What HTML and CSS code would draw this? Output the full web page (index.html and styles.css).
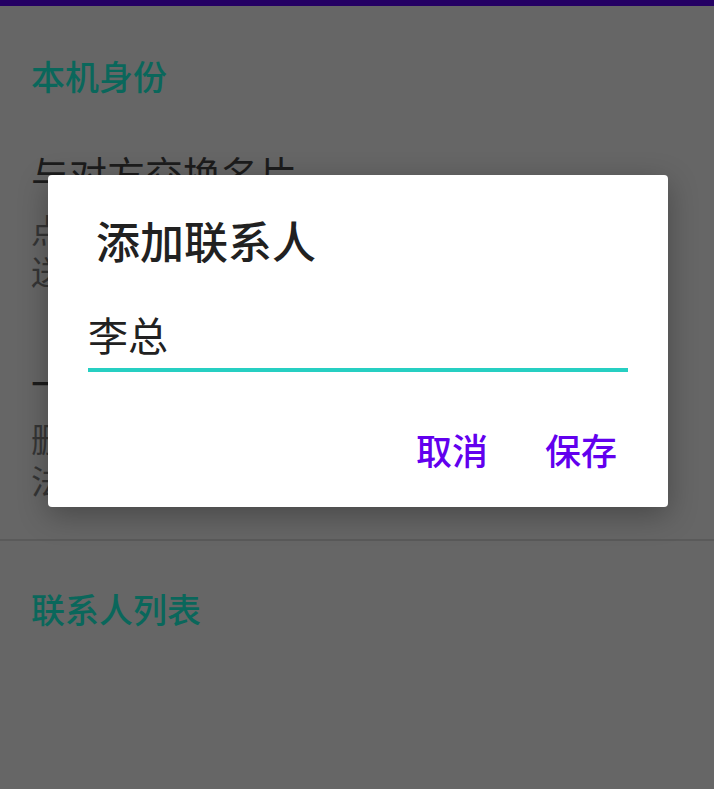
FILE: index.html
```html
<!DOCTYPE html>
<html lang="zh-CN">
<head>
    <meta charset="UTF-8">
    <meta name="viewport" content="width=device-width, initial-scale=1.0">
    <title>联系人</title>
    <link rel="stylesheet" href="styles.css">
</head>
<body>
    <div class="topbar"></div>

    <!-- 本机身份 -->
    <h2 class="section-title">本机身份</h2>
    <div class="pref-item">
        <div class="pref-title">与对方交换名片</div>
        <div class="pref-summary">点击生成本机名片二维码，对方扫描后即可<br>送达你的联系方式</div>
    </div>
    <div class="pref-item">
        <div class="pref-title">一键清空联系人</div>
        <div class="pref-summary">删除所有已保存的联系人，此操作无<br>法撤销</div>
    </div>
    <hr class="divider">

    <!-- 联系人列表 -->
    <h2 class="section-title second">联系人列表</h2>

    <!-- Dialog -->
    <div class="dialog">
        <div class="dialog-title">添加联系人</div>
        <input type="text" class="dialog-input" value="李总">
        <div class="dialog-actions">
            <button type="button">取消</button>
            <button type="button">保存</button>
        </div>
    </div>
</body>
</html>
```

FILE: styles.css
```css
body {
    margin: 0;
    background-color: #666666;
    font-family: "Noto Sans CJK SC", "Noto Sans", sans-serif;
    height: 789px;
    overflow: hidden;
}
.topbar {
    height: 6px;
    background-color: #240063;
}
.section-title {
    margin: 0;
    padding: 53px 31px 28px;
    font-size: 34px;
    line-height: 34px;
    font-weight: 500;
    color: #0a675b;
}
.section-title.second {
    padding-top: 51px;
}
.pref-item {
    padding: 33px 31px 38px;
}
.pref-title {
    font-size: 38px;
    line-height: 38px;
    color: #1c1c1c;
}
.pref-summary {
    margin-top: 16px;
    font-size: 33px;
    line-height: 42px;
    color: #353535;
    white-space: nowrap;
}
.divider {
    margin: 0;
    border: none;
    height: 2px;
    background-color: #5a5a5a;
}
.dialog {
    position: absolute;
    left: 48px;
    top: 175px;
    width: 620px;
    box-sizing: border-box;
    padding: 43px 40px 40px;
    background-color: #ffffff;
    border-radius: 4px;
    box-shadow: 0 8px 30px rgba(0, 0, 0, 0.3);
}
.dialog-title {
    padding-left: 8px;
    font-size: 44px;
    line-height: 44px;
    font-weight: 500;
    color: #212121;
}
.dialog-input {
    display: block;
    width: 100%;
    height: 58px;
    box-sizing: border-box;
    margin-top: 52px;
    padding: 0 0 14px;
    border: none;
    border-bottom: 4px solid #26cfc2;
    outline: none;
    background: transparent;
    font-family: inherit;
    font-size: 40px;
    line-height: 40px;
    color: #212121;
}
.dialog-actions {
    display: flex;
    justify-content: flex-end;
    gap: 57px;
    margin-top: 59px;
    padding-right: 11px;
}
.dialog-actions button {
    padding: 0;
    border: none;
    background: none;
    font-family: inherit;
    font-size: 36px;
    line-height: 36px;
    font-weight: 500;
    color: #6200ee;
    cursor: pointer;
}
```
